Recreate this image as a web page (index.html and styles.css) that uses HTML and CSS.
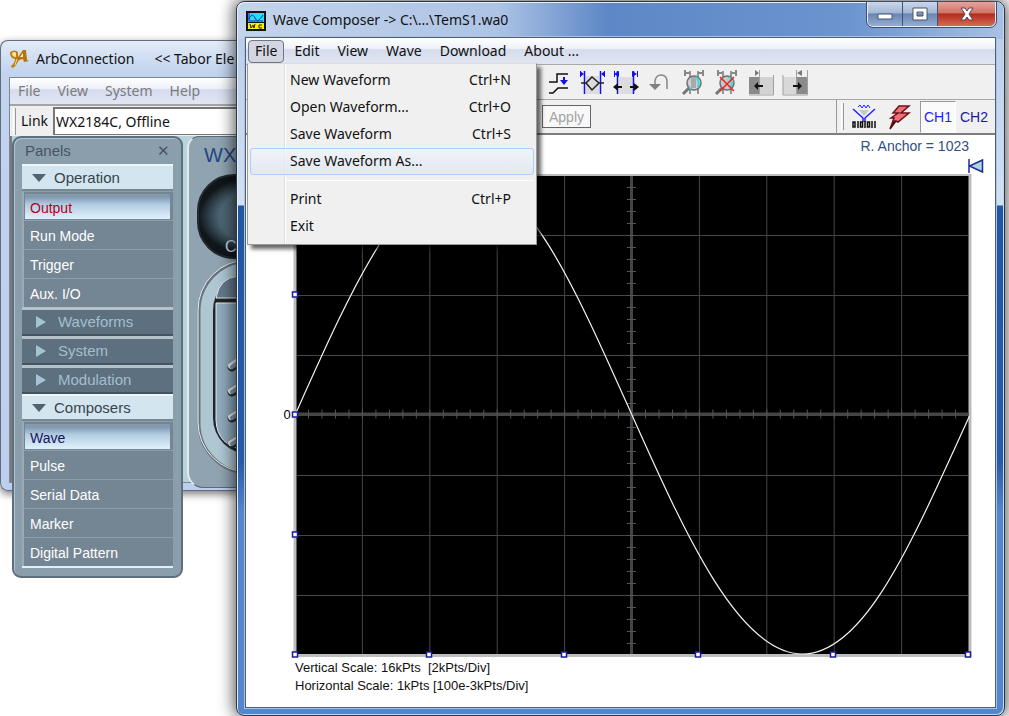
FILE: index.html
```html
<!DOCTYPE html>
<html lang="en">
<head>
<meta charset="utf-8">
<title>Wave Composer</title>
<link rel="stylesheet" href="styles.css">
</head>
<body>
<main class="desktop">

<section class="window conn" aria-label="ArbConnection">
  <header class="conn-title">
    <svg class="conn-logo" viewBox="0 0 20 20" aria-hidden="true">
      <path d="M1 3q5-3 8 0l0 7q-1 8-6 9l-1-2q4-3 4-7-5 0-5-7z" fill="#c07c10"/>
      <path d="M3 4q3-2 4 0v4q-4 0-4-4z" fill="#ffe9a0"/>
      <path d="M7 11 14 1l3 0 1 10 2 1-5 1-1-3-4 1-2 3z" fill="#b87408"/>
      <path d="M11 8l3-4v4z" fill="#fff0c0"/>
      <path d="M8 10l-2 6" stroke="#ffd870"/>
    </svg>
    <span>ArbConnection</span><span class="vendor">&lt;&lt; Tabor Ele</span>
  </header>
  <div class="conn-client">
    <nav class="menubar conn-menu">
      <button>File</button><button>View</button><button>System</button><button>Help</button>
    </nav>
    <div class="linkbar">
      <i class="grip"></i>
      <label for="link">Link</label>
      <input id="link" type="text" value="WX2184C, Offline">
    </div>
    <div class="workspace">
      <div class="instrument">
        <svg viewBox="0 0 120 352" preserveAspectRatio="xMinYMin meet" aria-hidden="true">
          <defs>
            <radialGradient id="lens"><stop offset="0" stop-color="#587080"/><stop offset=".7" stop-color="#4c6473"/><stop offset="1" stop-color="#10161a"/></radialGradient>
            <linearGradient id="key" x2="1"><stop offset="0" stop-color="#92adbe"/><stop offset="1" stop-color="#6f8c9f"/></linearGradient>
          </defs>
          <rect x="9" y="38" width="140" height="83" rx="36" fill="url(#lens)" stroke="#222a30" stroke-width="2"/>
          <rect x="10" y="124" width="140" height="212" rx="50" fill="#aec7d3" stroke="#69757e" stroke-width="3"/>
          <rect x="9" y="123" width="140" height="212" rx="50" fill="none" stroke="#e9eff2"/>
          <rect x="24" y="137" width="120" height="180" rx="36" fill="#1f262b"/>
          <path d="M27 161q3-20 22-22h20v22z" fill="#64788a" stroke="#e6ebee"/>
          <path d="M27 166h70v147H56q-28-4-29-30z" fill="url(#key)" stroke="#e6ebee"/>
          <g fill="none" stroke-linecap="round">
            <path d="M43 230l20-15M43 255l20-13M43 281l20-13M43 307l20-13" stroke="#2b3338" stroke-width="9"/>
            <path d="M42 229l20-15M42 254l20-13M42 280l20-13M42 306l20-13" stroke="#e6ebee" stroke-width="6"/>
            <path d="M43 230l20-15M43 255l20-13M43 281l20-13M43 307l20-13" stroke="#8299a9" stroke-width="4"/>
          </g>
          <text class="model" x="15" y="25">WX</text>
          <text class="chan" x="36" y="115">C</text>
        </svg>
      </div>
    </div>
  </div>
</section>

<aside class="panels" aria-label="Panels">
  <header class="panels-head"><span>Panels</span><button aria-label="Close panels">✕</button></header>
  <button class="group open"><i class="tri down"></i>Operation</button>
  <ul>
    <li><button class="on red">Output</button></li>
    <li><button>Run Mode</button></li>
    <li><button>Trigger</button></li>
    <li><button>Aux. I/O</button></li>
  </ul>
  <button class="group"><i class="tri right"></i>Waveforms</button>
  <button class="group"><i class="tri right"></i>System</button>
  <button class="group"><i class="tri right"></i>Modulation</button>
  <button class="group open"><i class="tri down"></i>Composers</button>
  <ul>
    <li><button class="on navy">Wave</button></li>
    <li><button>Pulse</button></li>
    <li><button>Serial Data</button></li>
    <li><button>Marker</button></li>
    <li><button>Digital Pattern</button></li>
  </ul>
</aside>

<section class="window wave" aria-label="Wave Composer">
  <header class="wave-title">
    <svg class="app-icon" viewBox="0 0 20 20" aria-hidden="true">
      <path d="M0 0h20v20H0z" fill="#111"/><path d="M2 2h16v9H2z" fill="#18e4f4"/><path d="M2 12h16v6H2z" fill="#f8ee10"/>
      <path d="M3 8c2-5 4-5 6-1s4 3 8-3M3 2v8h14" fill="none" stroke="#1428b0"/>
      <path d="M4 13l1 4 2-3 1 3 1-4M16 14h-3v3h3" fill="none" stroke="#222"/>
    </svg>
    <h1>Wave Composer -&gt; C:\...\TemS1.wa0</h1>
    <div class="controls">
      <button aria-label="Minimize"><svg viewBox="0 0 18 14"><path d="M2 7h14v5H2z" fill="#fff" stroke="#48546c"/></svg></button>
      <button aria-label="Maximize"><svg viewBox="0 0 18 14"><path d="M2 1h14v12H2zM6 5v4h6V5z" fill="#fff" fill-rule="evenodd" stroke="#48546c"/></svg></button>
      <button class="close" aria-label="Close"><svg viewBox="0 0 18 14"><path d="M3 1h4l2 3 2-3h4l-4 6 4 6h-4l-2-3-2 3H3l4-6z" fill="#fff" stroke="#5a4048"/></svg></button>
    </div>
  </header>

  <div class="client">
    <nav class="menubar wave-menu">
      <div class="menu-root">
        <button class="active" aria-expanded="true">File</button>
        <div class="dropdown" role="menu">
          <button role="menuitem"><span>New Waveform</span><kbd>Ctrl+N</kbd></button>
          <button role="menuitem"><span>Open Waveform...</span><kbd>Ctrl+O</kbd></button>
          <button role="menuitem"><span>Save Waveform</span><kbd>Ctrl+S</kbd></button>
          <button role="menuitem" class="hover"><span>Save Waveform As...</span></button>
          <hr>
          <button role="menuitem"><span>Print</span><kbd>Ctrl+P</kbd></button>
          <button role="menuitem"><span>Exit</span></button>
        </div>
      </div>
      <button>Edit</button><button>View</button><button>Wave</button><button>Download</button><button>About ...</button>
    </nav>

    <div class="toolbar tools">
      <button aria-label="Step"><svg viewBox="0 0 34 34"><path d="M7 17h8V9h11M7 28h4l5-5h10" fill="none" stroke="#111" stroke-width="1.500"/><path d="M22 12v5" stroke="#11e" stroke-width="2"/><path d="M18 15h8l-4 5z" fill="#11e"/></svg></button>
      <button aria-label="Zoom to anchors"><svg viewBox="0 0 34 34"><path d="M10 11h13v18H10z" fill="#dcdcdc"/><path d="M8.500 6v23M24.500 6v23" stroke="#11e" stroke-width="1.500"/><path d="M4.500 6v6M28.500 6v6" stroke="#11e"/><path d="M4 6l4 3-4 3zM29 6l-4 3 4 3z" fill="#11e"/><path d="M5 18h5l6-6 7 6h5M10 18l6 7 7-7" fill="none" stroke="#222" stroke-width="1.500"/></svg></button>
      <button aria-label="Spread anchors"><svg viewBox="0 0 34 34"><path d="M9 12h14v17H9z" fill="#dcdcdc"/><path d="M7.500 6v23M23.500 6v23" stroke="#11e" stroke-width="1.500"/><path d="M4.500 6v6M27.500 6v6" stroke="#11e"/><path d="M9 6L4 9l5 3zM22 6l5 3-5 3z" fill="#11e"/><path d="M5 22h7M20 22h8" stroke="#111" stroke-width="2"/><path d="M8 18l-5 4 5 4zM24 18l5 4-5 4z" fill="#111"/></svg></button>
      <button aria-label="Undo"><svg viewBox="0 0 34 34"><path d="M11 20v-4q1-6 6-6 6 0 6 7v7" fill="none" stroke="#888" stroke-width="1.500"/><path d="M5 19h12l-6 6z" fill="#808080"/></svg></button>
      <button aria-label="Zoom in"><svg viewBox="0 0 34 34"><path d="M12 6v23M20 6v23" stroke="#777" stroke-width="1.500"/><path d="M7 5v6M25 5v6M8 8h4M20 8h4" stroke="#888" stroke-width="2"/><circle cx="16" cy="18" r="7" fill="#d0d0d0" stroke="#707070" stroke-width="1.500"/><path d="M13 12h5v11h-5z" fill="#aaa"/><path d="M18 12q4 5 2 10M11 22l2 2" fill="none" stroke="#28e0e8" stroke-width="2"/><path d="M11 23l-6 6" stroke="#777" stroke-width="3"/></svg></button>
      <button aria-label="Zoom off"><svg viewBox="0 0 34 34"><path d="M11 6v23M19 6v23" stroke="#777" stroke-width="1.500"/><path d="M6 5v6M24 5v6M7 8h4M19 8h4" stroke="#888" stroke-width="2"/><circle cx="15" cy="18" r="7" fill="#c8c8c8" stroke="#707070" stroke-width="1.500"/><path d="M17 12q4 5 2 10" fill="none" stroke="#28e0e8" stroke-width="2"/><path d="M10 23l-6 6" stroke="#777" stroke-width="3"/><path d="M8 12l14 14M22 12L8 26" stroke="#e22" stroke-width="1.500"/></svg></button>
      <button aria-label="Trim left"><svg viewBox="0 0 34 34"><path d="M3 12h11v17H3z" fill="#8a8a8a"/><path d="M14 12h13v17H14z" fill="#d2d2d2"/><path d="M13.500 5v24M27.500 10v20H3" fill="none" stroke="#a0a0a0"/><path d="M9 5l4 3-4 3z" fill="#777"/><path d="M9 21h8" stroke="#111" stroke-width="2"/><path d="M12 17l-4 4 4 4z" fill="#111"/></svg></button>
      <button aria-label="Trim right"><svg viewBox="0 0 34 34"><path d="M3 12h13v17H3z" fill="#d8d8d8"/><path d="M17 12h10v17H17z" fill="#8a8a8a"/><path d="M16.500 5v24M27.500 5v25H3V10" fill="none" stroke="#a0a0a0"/><path d="M22 5l-5 3 5 3z" fill="#777"/><path d="M13 21h7" stroke="#111" stroke-width="2"/><path d="M18 17l4 4-4 4z" fill="#111"/></svg></button>
    </div>

    <div class="toolbar channels">
      <button class="apply" disabled>Apply</button>
      <div class="right">
        <i class="grip"></i>
        <button aria-label="Send binary"><svg viewBox="0 0 34 34"><path d="M10 7l2-2 2 3 2-3 2 3 2-3 2 3" fill="none" stroke="#22f"/><path d="M5 9l10 9v4M27 9l-10 9v4" fill="none" stroke="#22f" stroke-width="1.500"/><path d="M11 10h10l-5 6z" fill="#c8c8c8"/><g fill="none" stroke="#111" stroke-width="1.500"><rect x="5" y="22" width="2" height="5"/><path d="M10 21v7M17 21v7M24 21v7"/><rect x="12.500" y="22" width="2" height="5"/><rect x="19.500" y="22" width="2" height="5"/><path d="M27 21v7"/></g></svg></button>
        <button aria-label="Trigger"><svg viewBox="0 0 34 34"><path d="M15 6h10l-8 7h8l-11 9-2-1-6 8 4-11h-3l7-5H9z" fill="#f07078" stroke="#701018" stroke-width="1.500"/><path d="M12 21l-6 8 4-9z" fill="#401018"/></svg></button>
        <button class="ch selected">CH1</button>
        <button class="ch">CH2</button>
      </div>
    </div>

    <div class="canvas">
      <p class="anchor">R. Anchor = 1023</p>
      <svg class="plot" viewBox="281 157 708 502" role="img" aria-label="One sine period">
        <defs>
          <pattern id="grid" x="295" y="175" width="67.400" height="60" patternUnits="userSpaceOnUse"><path d="M0 0h67.400M0 0v60" fill="none" stroke="#747474" stroke-width="2"/></pattern>
        </defs>
        <path d="M294 174h678v483H294z" fill="#bdbdbd"/>
        <path d="M297 176h672v478H297z" fill="#000"/>
        <path d="M297 176h672v478H297z" fill="url(#grid)" opacity=".6"/>
        <path d="M297 414h672M632 176v478" stroke="#444" stroke-width="3"/>
        <path d="M308.500 414H969" stroke="#555" stroke-width="9" stroke-dasharray="1 12.480"/>
        <path d="M632 187V654" stroke="#555" stroke-width="9" stroke-dasharray="1 11"/>
        <path d="M296 414C351 291 402 175 464.500 175S577 291 632 414 740 654 803 654 914 538 970 416" fill="none" stroke="#f4f4ea" stroke-width="1.200"/>
        <g fill="#fff" stroke="#1a1a9a" stroke-width="1.500">
          <path d="M293 292h5v5h-5zM293 412h5v5h-5zM293 532h5v5h-5zM293 652h5v5h-5zM427 652h5v5h-5zM562 652h5v5h-5zM696 652h5v5h-5zM831 652h5v5h-5zM966 652h5v5h-5z"/>
        </g>
        <path d="M983 160v12l-13-6zM969.500 159v14" fill="#acd6e0" stroke="#1c2ca0" stroke-width="1.500"/>
        <text class="zero" x="284" y="419">0</text>
      </svg>
      <div class="scales">
        <p>Vertical Scale: 16kPts&nbsp; [2kPts/Div]</p>
        <p>Horizontal Scale: 1kPts [100e-3kPts/Div]</p>
      </div>
    </div>
  </div>
</section>
</main>
</body>
</html>
```
FILE: styles.css
```css
* { box-sizing: border-box; }
body { margin: 0; background: #fff; color: #111; font: 14px/18px "Noto Sans", "Open Sans", sans-serif; }
button { font: inherit; color: inherit; border: 0; padding: 0; background: none; text-align: left; }
h1, p, ul { margin: 0; padding: 0; font: inherit; }
ul { list-style: none; }
svg { display: block; }
.desktop { position: relative; height: 100vh; overflow: hidden; }
.window { position: absolute; display: flex; flex-direction: column; border: 1px solid #2c3644; border-radius: 8px; }

/* ArbConnection window, its right side lies behind the composer */
.conn { left: 0; top: 40px; width: 240px; height: 451px; padding: 0 0 7px 8px; border-color: #626c7c; border-right: 0; border-radius: 8px 0 0 8px; background: linear-gradient(#e2ebf8, #c2d3ee 32px, #bccfee); box-shadow: 0 3px 8px #0008; }
.conn-title { display: flex; align-items: center; height: 36px; overflow: hidden; }
.conn-logo { width: 20px; height: 20px; margin-right: 7px; }
.vendor { margin-left: 20px; white-space: nowrap; }
.conn-client { flex: 1; min-height: 0; display: flex; flex-direction: column; border: 1px solid #7e8490; border-right: 0; background: #efefef; }
.menubar { display: flex; align-items: center; height: 26px; background: linear-gradient(#fff, #eef1f8 40%, #d5dced 45%, #e1e6f3); }
.conn-menu { padding-left: 8px; gap: 17px; color: #7b7b7b; }
.linkbar { display: flex; align-items: center; height: 32px; border-top: 2px solid #a4a4a8; }
.grip { width: 3px; height: 27px; margin: 0 5px 0 3px; border-right: 1px solid #999; border-left: 1px solid #fff; }
.linkbar input { flex: 1; min-width: 0; height: 28px; margin-left: 5px; padding: 0 1px; border: 2px solid #777; border-width: 2px 0 1px 2px; background: #fff; font: inherit; color: #111; }
.workspace { flex: 1; min-height: 0; padding-left: 175px; border-left: 2px solid #7b7b7b; background: #b9d3dc; }
.instrument { height: 352px; background: #8fa3b1; border: 1px solid #5d6b75; border-left: 2px solid #e3eaee; border-radius: 12px 0 0 16px; overflow: hidden; }
.instrument svg { width: 120px; height: 352px; }
.model { font: 20px "Liberation Sans", sans-serif; fill: #23467f; }
.chan { font: 16px "Liberation Sans", sans-serif; fill: #c3d8e2; }

/* Floating panel */
.panels { position: absolute; left: 12px; top: 136px; width: 171px; padding: 0 8px 8px; font-family: "Liberation Sans", sans-serif; color: #fff; background: #8b9eac; border: 2px solid #5d6e7c; border-radius: 9px; box-shadow: inset 1px 1px #b2c4d0; }
.panels-head { display: flex; justify-content: space-between; align-items: center; height: 26px; padding: 0 3px; color: #47545e; font-size: 15px; }
.group { display: flex; align-items: center; gap: 8px; width: 100%; height: 29px; padding-left: 10px; font-size: 15px; background: #5d707f; color: #a4bfcf; border-top: 3px solid #b6c2ca; border-bottom: 2px solid #44535f; }
.group.open { height: 27px; background: #d3e5ef; color: #38434c; border-top: 2px solid #edf6fb; border-bottom-color: #788892; }
.tri { width: 14px; border: 0 solid transparent; }
.tri.down { border-width: 8px 7px 0; border-top-color: #53626d; }
.tri.right { border-width: 6px 0 6px 10px; border-left-color: #a4c4d4; width: 10px; margin-left: 4px; }
.panels li { height: 29px; padding: 2px 3px 1px 1px; border-left: 2px solid #9aabb8; border-top: 1px solid #8b9dac; background: #748593; }
.panels li button { width: 100%; height: 25px; padding-left: 5px; }
.panels li .on { background: linear-gradient(#7e9ab5, #b3cde2 35%, #e0f1fb); border-top: 3px solid #8599a8; }
.panels .red { color: #b00024; }
.panels .navy { color: #16145e; }
.panels ul:last-child { border-bottom: 2px solid #e3edf3; }

/* Wave Composer window */
.wave { left: 236px; right: 4px; top: 1px; bottom: 0; padding: 0 8px 7px; background: linear-gradient(90deg, #c3d4ec, #adc4e5 260px, #5d87c6 370px, #6c94cf 80%, #a8c0e2) top / 100% 37px no-repeat, linear-gradient(#b6cbe7, #d2e0f1 203px, #2156a0 204px, #285ba5 460px, #5486cb 510px, #5486cb); box-shadow: inset 1px 1px #e5effa, inset -1px -1px #c3d8f4, 0 0 16px 2px #000a; }
.wave-title { display: flex; align-items: center; height: 35px; }
.app-icon { width: 20px; height: 20px; margin: 2px 7px 0 1px; }
.wave-title h1 { flex: 1; white-space: nowrap; }
.controls { display: flex; align-self: flex-start; border: 1px solid #e8eef8; border-top: 0; border-radius: 0 0 6px 6px; outline: 1px solid #3c4d6c; overflow: hidden; }
.controls button { width: 35px; height: 24px; display: grid; place-items: center; border-right: 1px solid #415374; background: linear-gradient(#cad7ea, #a3b7d5 45%, #6985b1 50%, #94add3); }
.controls .close { width: 57px; border: 0; background: linear-gradient(#e0a69b, #cf7566 45%, #b32b1c 50%, #d36b56); }
.controls svg { width: 18px; height: 14px; }
.client { flex: 1; min-height: 0; display: flex; flex-direction: column; border: 1px solid #4d5d74; background: #fff; box-shadow: 0 0 0 1px #a9c4ea; }
.wave-menu { padding-left: 2px; gap: 18px; }
.menu-root { position: relative; margin-right: -8px; }
.menu-root .active { height: 23px; padding: 0 6px; background: #d3d6e0; border: 1px solid #6f7685; border-radius: 4px; }
.dropdown { position: absolute; z-index: 2; left: -1px; top: 23px; width: 290px; padding: 3px 2px 4px; border: 1px solid #999; border-top-color: #ddd; background: linear-gradient(90deg, transparent 36px, #dedede 36px, #dedede 37px, #fff 37px, #fff 38px, transparent 38px), #f0f0f0; box-shadow: 4px 4px 4px #0009; }
.dropdown button { display: flex; justify-content: space-between; align-items: center; width: 100%; height: 27px; padding: 0 22px 0 39px; border: 1px solid transparent; border-radius: 3px; }
.dropdown kbd { font: inherit; }
.dropdown .hover { border-color: #aecff7; background: linear-gradient(#f1f4f9cc, #dfe6f1cc); }
.dropdown hr { margin: 5px 0 5px 35px; border: 0; border-top: 1px solid #fff; }
.toolbar { display: flex; align-items: center; background: #f0f0f0; }
.tools { height: 36px; padding-left: 296px; border-top: 1px solid #aaa; border-bottom: 1px solid #a6a6a6; }
.toolbar svg { width: 34px; height: 34px; }
.channels { height: 35px; padding-left: 296px; justify-content: space-between; border-bottom: 2px solid #7d7d7d; }
.apply { width: 49px; height: 23px; text-align: center; border: 1px solid #666; background: #f8f8f8; color: #a2a2a2; font: 14px "Liberation Sans", sans-serif; }
.right { display: flex; align-items: center; border-left: 1px solid #999; padding: 0 3px 0 1px; }
.right .grip { margin-right: 4px; }
.right button { width: 36px; }
.right .ch { height: 32px; text-align: center; font: 14px "Liberation Sans", sans-serif; color: #1a1aa0; }
.right .selected { background: #fafafa; border: 1px solid #999; border-right-color: #fff; border-bottom-color: #fff; color: #22f; }
.canvas { flex: 1; min-height: 0; display: flex; flex-direction: column; padding: 0 6px 12px 34px; font-family: "Liberation Sans", sans-serif; }
.anchor { align-self: flex-end; height: 22px; padding: 2px 20px 0 0; color: #305082; }
.plot { flex: 1; min-height: 0; width: 100%; }
.zero { font: 13px "Liberation Sans", sans-serif; }
.scales { padding-left: 15px; font-size: 13px; }
```
